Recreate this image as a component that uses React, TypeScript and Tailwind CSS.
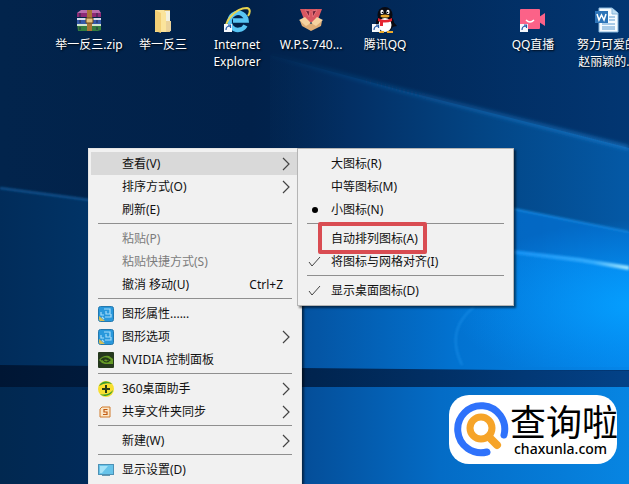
import React from "react";

type Row = { label: string; icon?: React.ReactNode; arrow?: boolean; shortcut?: string; disabled?: boolean; active?: boolean; mark?: "dot" | "check" };

function Wallpaper() {
  return (
    <svg className="absolute inset-0 h-full w-full" viewBox="0 0 629 484" preserveAspectRatio="none" aria-hidden="true">
      <defs>
        <linearGradient id="sky" gradientUnits="userSpaceOnUse" x1="0" y1="0" x2="629" y2="0">
          <stop offset="0" stopColor="#02244c" />
          <stop offset="0.4" stopColor="#01214a" />
          <stop offset="1" stopColor="#023672" />
        </linearGradient>
        <linearGradient id="upper" gradientUnits="userSpaceOnUse" x1="230" y1="0" x2="629" y2="0">
          <stop offset="0" stopColor="#02264f" stopOpacity="0" />
          <stop offset="0.3" stopColor="#032f64" />
          <stop offset="0.65" stopColor="#034686" />
          <stop offset="1" stopColor="#0459a6" />
        </linearGradient>
        <linearGradient id="lower" gradientUnits="userSpaceOnUse" x1="0" y1="0" x2="629" y2="0">
          <stop offset="0" stopColor="#012c5a" />
          <stop offset="0.15" stopColor="#013467" />
          <stop offset="0.5" stopColor="#0455a4" />
          <stop offset="0.72" stopColor="#0272d0" />
          <stop offset="1" stopColor="#0486ea" />
        </linearGradient>
        <radialGradient id="glow" gradientUnits="userSpaceOnUse" cx="0" cy="0" r="1" gradientTransform="translate(640 305) scale(190 85)">
          <stop offset="0" stopColor="#05a0ff" />
          <stop offset="1" stopColor="#0490f8" stopOpacity="0" />
        </radialGradient>
        <linearGradient id="floor" x1="0" y1="0" x2="1" y2="0">
          <stop offset="0" stopColor="#012850" />
          <stop offset="0.15" stopColor="#012b5b" />
          <stop offset="0.5" stopColor="#04509c" />
          <stop offset="0.7" stopColor="#046cc6" />
          <stop offset="1" stopColor="#0785e2" />
        </linearGradient>
        <linearGradient id="bar" x1="0" y1="0" x2="1" y2="0">
          <stop offset="0" stopColor="#001634" />
          <stop offset="0.5" stopColor="#00244f" />
          <stop offset="1" stopColor="#034288" />
        </linearGradient>
        <linearGradient id="beam" gradientUnits="userSpaceOnUse" x1="260" y1="0" x2="629" y2="0">
          <stop offset="0" stopColor="#1f7fd0" stopOpacity="0" />
          <stop offset="1" stopColor="#1f7fd0" />
        </linearGradient>
        <linearGradient id="ray" gradientUnits="userSpaceOnUse" x1="510" y1="0" x2="629" y2="0">
          <stop offset="0" stopColor="#1490f4" />
          <stop offset="0.7" stopColor="#33adff" />
          <stop offset="1" stopColor="#a5e8ff" />
        </linearGradient>
        <filter id="soft" filterUnits="userSpaceOnUse" x="0" y="0" width="629" height="484"><feGaussianBlur stdDeviation="2" /></filter>
        <filter id="edge" filterUnits="userSpaceOnUse" x="0" y="0" width="629" height="484"><feGaussianBlur stdDeviation="1" /></filter>
      </defs>
      <rect width="629" height="484" fill="url(#sky)" />
      <path d="M270 55L400 90L629 148V370H270Z" fill="url(#upper)" />
      <path d="M270 55L400 90L629 148" fill="none" stroke="url(#beam)" strokeWidth="3" filter="url(#soft)" />
      <path d="M0 188L90 200L300 230L400 195L514 209L629 232V370H0Z" fill="url(#lower)" />
      <path d="M400 190L514 209L629 232V268L514 252L400 240Z" fill="#035cb4" opacity="0.6" />
      <path d="M0 188L90 200" stroke="#135795" strokeWidth="2" filter="url(#edge)" />
      <rect y="215" width="629" height="152" fill="url(#glow)" />
      <path d="M480 204L514 209L629 232" fill="none" stroke="#1684dc" strokeWidth="2" filter="url(#edge)" />
      <path d="M480 248L580 260L629 268" fill="none" stroke="url(#ray)" strokeWidth="4" filter="url(#edge)" />
      <path d="M462 365Q445 330 474 307" fill="none" stroke="#2197ef" strokeWidth="2" opacity="0.5" filter="url(#edge)" />
      <rect y="386" width="629" height="98" fill="url(#floor)" />
      <path d="M0 365L302 368L629 371V387H0Z" fill="url(#bar)" />
    </svg>
  );
}

const ShortcutBadge = () => (
  <g>
    <rect x="1" y="18" width="8" height="8" fill="#f5f8fc" />
    <path d="M3 24C3 21 4 20 7 20M5 19H7.500V22" fill="none" stroke="#245aa8" strokeWidth="1.200" />
  </g>
);

const ZipArt = () => (
  <svg width="28" height="28" viewBox="0 0 28 28" aria-hidden="true">
    <path d="M2 7L6 4H24L26 7Z" fill="#b96dac" /><path d="M2 7H26V11H2Z" fill="#8d2a75" />
    <path d="M2 12H26V18H2Z" fill="#3458a8" /><path d="M2 12H26V14H2Z" fill="#d4dcec" />
    <path d="M2 18H26V24L23 25H3Z" fill="#347d40" /><path d="M2 18H26V20H2Z" fill="#d3e4d0" />
    <path d="M12 4H17V25H12Z" fill="#a87536" /><path d="M11 12H18V17H11Z" fill="#e4c17b" stroke="#6b4821" />
    <path d="M5 7V11M22 7V11M5 14V17M22 14V17M5 21V24M22 21V24" stroke="#222a48" />
  </svg>
);
const FolderArt = () => (
  <svg width="28" height="28" viewBox="0 0 28 28" aria-hidden="true">
    <path d="M13 4H21V26H13Z" fill="#d9b868" /><path d="M16 5H21V25H16Z" fill="#f2f0df" />
    <path d="M6 4H15L17 7V26H6Z" fill="#fbe49b" /><path d="M6 4L12 7V27L6 25Z" fill="#f2cf76" /><path d="M17 15H22V25L17 26Z" fill="#ead29a" />
  </svg>
);
const IeArt = () => (
  <svg width="28" height="28" viewBox="0 0 28 28" aria-hidden="true">
    <path d="M22.500 19.500A8.500 8.500 0 1 1 23.500 14.500H10" fill="none" stroke="#58c5f4" strokeWidth="4.500" />
    <path d="M4 24C-1 18 12 2 24 2C28 3 27 7 25 10" fill="none" stroke="#e9d44e" strokeWidth="2" />
    <ShortcutBadge />
  </svg>
);
const BoxArt = () => (
  <svg width="28" height="28" viewBox="0 0 28 28" aria-hidden="true">
    <path d="M3 3H25L20 16H8Z" fill="#d95761" /><path d="M8 4L12 11L13 5ZM20 4L16 11L15 5Z" fill="#75263b" stroke="#e8727a" strokeWidth="1" />
    <path d="M3 15L14 18L25 15L24 20L14 25L5 20Z" fill="#dfae77" /><path d="M2 14L8 11L14 17L9 20ZM26 14L20 11L14 17L19 20Z" fill="#f6d3a0" />
  </svg>
);
const PenguinArt = () => (
  <svg width="28" height="28" viewBox="0 0 28 28" aria-hidden="true">
    <path d="M7 14L3 20L7 20M21 14L26 20L21 21Z" fill="#090a12" /><ellipse cx="14" cy="17" rx="9" ry="9" fill="#090a12" />
    <ellipse cx="14" cy="9" rx="7.500" ry="8" fill="#090a12" /><ellipse cx="14" cy="19" rx="6.500" ry="7" fill="#fff" />
    <ellipse cx="11" cy="6" rx="1.600" ry="2.300" fill="#fff" /><ellipse cx="17" cy="6" rx="1.600" ry="2.300" fill="#fff" />
    <circle cx="11.500" cy="6.500" r=".8" /><circle cx="16.500" cy="6.500" r=".8" /><ellipse cx="14" cy="10" rx="4.500" ry="1.500" fill="#e9a72a" />
    <path d="M7 12Q14 16 21 12V15Q14 18 7 15ZM9 15H12V20H9Z" fill="#e52631" /><path d="M8 25H13V27H8ZM16 25H22V27H16Z" fill="#eba92b" />
    <ShortcutBadge />
  </svg>
);
const CameraArt = () => (
  <svg width="28" height="28" viewBox="0 0 28 28" aria-hidden="true">
    <rect x="1" y="3" width="20" height="20" rx="1" fill="#fb6288" /><path d="M20 11L26 7V20L20 16Z" fill="#fb6288" />
    <path d="M7 14Q11 18 15 14" fill="none" stroke="#fff" strokeWidth="1.500" /><ShortcutBadge />
  </svg>
);
const WordArt = () => (
  <svg width="28" height="28" viewBox="0 0 28 28" aria-hidden="true">
    <path d="M6 2H19L25 7V26H6Z" fill="#f6fbff" stroke="#87b7dd" /><path d="M19 2V8H25" fill="#bcdcf2" stroke="#87b7dd" />
    <path d="M16 11H22M16 14H22M9 18H22M9 21H22M9 23H22" stroke="#5c9bd0" /><rect x="2" y="5" width="13" height="12" fill="#2d74b8" />
    <path d="M4 8L6 14L8.500 9L11 14L13 8" fill="none" stroke="#fff" strokeWidth="1.500" />
  </svg>
);

const desktopItems: { label: string[]; art: React.ReactNode; col: string }[] = [
  { label: ["举一反三.zip"], art: <ZipArt />, col: "col-start-1" },
  { label: ["举一反三"], art: <FolderArt />, col: "col-start-2" },
  { label: ["Internet", "Explorer"], art: <IeArt />, col: "col-start-3" },
  { label: ["W.P.S.740..."], art: <BoxArt />, col: "col-start-4" },
  { label: ["腾讯QQ"], art: <PenguinArt />, col: "col-start-5" },
  { label: ["QQ直播"], art: <CameraArt />, col: "col-start-7" },
  { label: ["努力可爱的", "赵丽颖的..."], art: <WordArt />, col: "col-start-8" },
];

const GraphicsIcon = () => (
  <svg width="16" height="16" viewBox="0 0 16 16" aria-hidden="true">
    <rect x=".5" y=".5" width="15" height="15" rx="2" fill="#2998dc" stroke="#2479ae" /><path d="M1 10L7 15H2L1 14Z" fill="#d5bd57" />
    <path d="M6 3H12V8H8V5M3 6V9H6M7 11H13V8M4 11L6 13" fill="none" stroke="#a5dcfa" strokeWidth="1.200" />
  </svg>
);
const NvidiaIcon = () => (
  <svg width="16" height="16" viewBox="0 0 16 16" aria-hidden="true">
    <rect width="16" height="16" rx="1" fill="#25381d" /><path d="M1 8Q5 3 11 4L15 7V12H7Q3 11 1 8Z" fill="#659a26" />
    <path d="M3 8Q7 4 12 8Q8 12 5 8Q8 6 10 8" fill="none" stroke="#233a18" strokeWidth="1.200" />
  </svg>
);
const PlusIcon = () => (
  <svg width="16" height="16" viewBox="0 0 16 16" aria-hidden="true">
    <circle cx="8" cy="8" r="8" fill="#f8df30" /><path d="M1 5A8 8 0 0 1 14 3Q7 1 1 5ZM2 13Q10 15 15 9A8 8 0 0 1 2 13Z" fill="#3b9e2e" />
    <path d="M8 4V12M4 8H12" stroke="#273c18" strokeWidth="2" />
  </svg>
);
const ShareIcon = () => (
  <svg width="16" height="16" viewBox="0 0 16 16" aria-hidden="true">
    <path d="M4 3H12V13H2V5Z" fill="#fae7c9" stroke="#d17b2a" /><path d="M9.500 5.500H6V8H9V10.500H5" fill="none" stroke="#c35b12" strokeWidth="1.200" />
  </svg>
);
const ScreenIcon = () => (
  <svg width="16" height="16" viewBox="0 0 16 16" aria-hidden="true">
    <rect x=".5" y="2.500" width="15" height="10" fill="#67c3e9" stroke="#4d91b5" /><path d="M2 4H10L4 11H2Z" fill="#a5e2f7" /><path d="M4 13.500H12" stroke="#6597b0" />
  </svg>
);

const mainGroups: Row[][] = [
  [{ label: "查看(V)", arrow: true, active: true }, { label: "排序方式(O)", arrow: true }, { label: "刷新(E)" }],
  [{ label: "粘贴(P)", disabled: true }, { label: "粘贴快捷方式(S)", disabled: true }, { label: "撤消 移动(U)", shortcut: "Ctrl+Z" }],
  [{ label: "图形属性......", icon: <GraphicsIcon /> }, { label: "图形选项", icon: <GraphicsIcon />, arrow: true }, { label: "NVIDIA 控制面板", icon: <NvidiaIcon /> }],
  [{ label: "360桌面助手", icon: <PlusIcon />, arrow: true }, { label: "共享文件夹同步", icon: <ShareIcon />, arrow: true }],
  [{ label: "新建(W)", arrow: true }],
  [{ label: "显示设置(D)", icon: <ScreenIcon /> }],
];

const viewGroups: Row[][] = [
  [{ label: "大图标(R)" }, { label: "中等图标(M)" }, { label: "小图标(N)", mark: "dot" }],
  [{ label: "自动排列图标(A)" }, { label: "将图标与网格对齐(I)", mark: "check" }],
  [{ label: "显示桌面图标(D)", mark: "check" }],
];

function MenuRow({ row }: { row: Row }) {
  return (
    <button
      type="button"
      role="menuitem"
      disabled={row.disabled}
      className={`flex h-[23px] w-full items-center pr-2 pl-[7px] text-left ${row.active ? "bg-[#d9d9d9]" : ""} ${row.disabled ? "text-[#7c7c7c]" : "text-[#111]"}`}
    >
      <span className="flex w-6 shrink-0 items-center">
        {row.icon}
        {row.mark === "dot" && <span className="ml-[5px] size-[6px] rounded-full bg-black" />}
        {row.mark === "check" && (
          <svg width="16" height="12" viewBox="0 0 16 12" fill="none" stroke="#444" aria-hidden="true"><path d="M2 6L5 10L13 1" /></svg>
        )}
      </span>
      <span className="flex-1 whitespace-nowrap">{row.label}</span>
      {row.shortcut && <span className="pr-2">{row.shortcut}</span>}
      {row.arrow && (
        <svg width="10" height="14" viewBox="0 0 10 14" fill="none" stroke="#444" strokeWidth="1.200" aria-hidden="true"><path d="M2 1L8 7L2 13" /></svg>
      )}
    </button>
  );
}

function Menu({ groups, label, className }: { groups: Row[][]; label: string; className: string }) {
  return (
    <div role="menu" aria-label={label} className={`absolute border bg-[#f1f1f1] px-[2px] py-[3px] shadow-[2px_2px_2px_#0008] ${className}`}>
      {groups.map((group, i) => (
        <React.Fragment key={i}>
          {i > 0 && <hr className="mx-[7px] my-[2px] h-[2px] border-0 border-t border-[#8f8f8f]" />}
          {group.map((row) => <MenuRow key={row.label} row={row} />)}
        </React.Fragment>
      ))}
    </div>
  );
}

function SiteLogo() {
  return (
    <div className="absolute right-3 bottom-5 flex h-[69px] w-[168px] items-center rounded-[20px] bg-white pl-[5px]">
      <svg className="shrink-0" width="56" height="58" viewBox="0 0 56 58" fill="none" strokeLinecap="round" aria-hidden="true">
        <path d="M50 34A23.500 23.500 0 1 0 33 51" stroke="#2f72fb" strokeWidth="7" />
        <circle cx="27" cy="27" r="11" stroke="#f6a429" strokeWidth="7" />
        <path d="M36 37L43 44" stroke="#f6a429" strokeWidth="8" />
      </svg>
      <div className="text-black">
        <div className="font-['Noto_Sans_CJK_SC',sans-serif] text-[36px] leading-[38px] whitespace-nowrap">查询啦</div>
        <div className="pl-1 font-['Noto_Sans',sans-serif] text-[14px] leading-[20px] font-medium">chaxunla.com</div>
      </div>
    </div>
  );
}

export default function App() {
  return (
    <main className="relative min-h-screen overflow-hidden bg-[#02204a] font-['Noto_Sans','Noto_Sans_CJK_SC',sans-serif] text-[12px]">
      <Wallpaper />
      <div className="relative grid grid-cols-[repeat(8,74px)] pt-[6px] pl-[52px]">
        {desktopItems.map((item) => (
          <button key={item.label[0]} type="button" className={`flex flex-col items-center gap-[2px] leading-[17px] text-white [text-shadow:1px_1px_2px_#000] ${item.col}`}>
            {item.art}
            <span className="whitespace-nowrap">
              {item.label.map((line) => <span key={line} className="block">{line}</span>)}
            </span>
          </button>
        ))}
      </div>
      <Menu groups={mainGroups} label="桌面" className="top-[148px] left-[88px] w-[214px] border-[#e4e4e4]" />
      <Menu groups={viewGroups} label="查看" className="top-[148px] left-[297px] w-[217px] border-[#b5b5b5]" />
      <div className="absolute top-[222px] left-[318px] h-8 w-[109px] rounded-[2px] border-4 border-[#d94c52]" />
      <SiteLogo />
    </main>
  );
}
